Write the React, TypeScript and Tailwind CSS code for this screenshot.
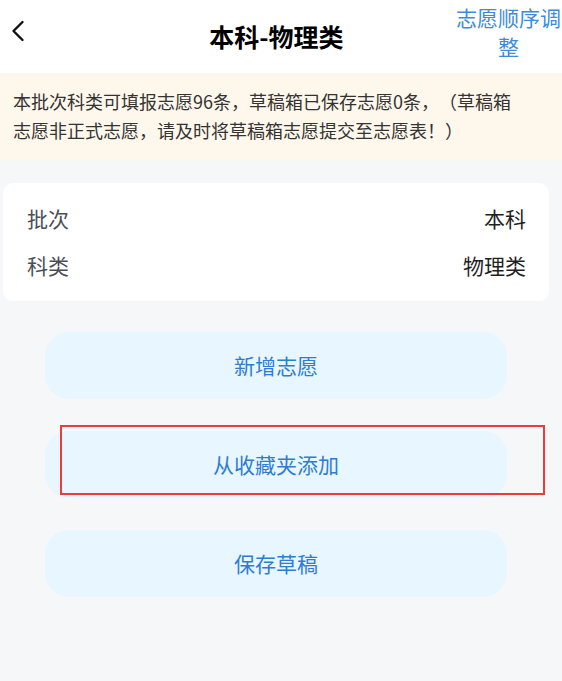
import { ChevronLeft } from "lucide-react";

const font = {
  fontFamily: '"Noto Sans CJK SC", "Noto Sans", sans-serif',
};

const infoRows = [
  { label: "批次", value: "本科" },
  { label: "科类", value: "物理类" },
];

function ActionButton({ label, marked }: { label: string; marked?: boolean }) {
  return (
    <div className="relative ml-[45px] mr-[55px]">
      <button className="flex h-[67px] w-full items-center justify-center rounded-[24px] bg-[#e7f6ff] text-[21px] text-[#2f7dd3]">
        {label}
      </button>
      {/* annotation box */}
      {marked && (
        <div className="pointer-events-none absolute left-[15px] right-[-38px] top-[-6px] h-[70px] border-[2.5px] border-[#ef3a3a]" />
      )}
    </div>
  );
}

export default function App() {
  return (
    <div className="min-h-[681px] w-[562px] overflow-hidden bg-[#f6f7f9]" style={font}>
      {/* Header */}
      <div className="flex h-[73px] bg-white">
        <div className="flex w-[98px] items-start pt-[13px]">
          <ChevronLeft size={36} strokeWidth={1.6} className="text-[#111]" />
        </div>
        <h1 className="flex flex-1 items-center justify-center text-[25px] font-bold text-black">
          本科-物理类
        </h1>
        <div className="w-[107px] pt-[3px] text-center text-[21px] leading-[29px] text-[#3d8be0]">
          志愿顺序调整
        </div>
      </div>

      {/* Notice */}
      <div className="bg-[#fef7ec] pb-[16px] pl-[13px] pt-[14px]">
        <p className="w-[512px] text-[18px] leading-[29px] text-[#333] [text-spacing-trim:space-all]">
          本批次科类可填报志愿96条，草稿箱已保存志愿0条，（草稿箱志愿非正式志愿，请及时将草稿箱志愿提交至志愿表！）
        </p>
      </div>

      {/* Info card */}
      <div className="ml-[3px] mr-[13px] mt-[22px] rounded-[10px] bg-white pb-[12px] pl-[24px] pr-[23px] pt-[12px]">
        {infoRows.map((row) => (
          <div key={row.label} className="flex h-[47px] items-center justify-between text-[21px]">
            <span className="text-[#4a4f57]">{row.label}</span>
            <span className="text-[#1f1f1f]">{row.value}</span>
          </div>
        ))}
      </div>

      {/* Actions */}
      <div className="mt-[31px] flex flex-col gap-[32px] pb-[80px]">
        <ActionButton label="新增志愿" />
        <ActionButton label="从收藏夹添加" marked />
        <ActionButton label="保存草稿" />
      </div>
    </div>
  );
}
